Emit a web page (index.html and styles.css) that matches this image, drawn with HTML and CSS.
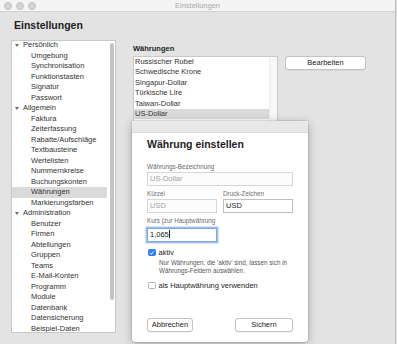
FILE: index.html
```html
<!DOCTYPE html>
<html lang="de">
<head>
    <meta charset="UTF-8">
    <meta name="viewport" content="width=device-width, initial-scale=1.0">
    <title>Einstellungen</title>
    <link rel="stylesheet" href="styles.css">
</head>
<body>
    <div class="window">
        <div class="titlebar">
            <div class="lights"><span></span><span></span><span></span></div>
            <div class="title">Einstellungen</div>
            <div></div>
        </div>

        <div class="content">
            <h1>Einstellungen</h1>

            <div class="panes">
                <!-- Navigation links -->
                <div class="sidebar">
                    <ul class="tree">
                        <li class="group"><i class="tri"></i>Persönlich</li>
                        <li>Umgebung</li>
                        <li>Synchronisation</li>
                        <li>Funktionstasten</li>
                        <li>Signatur</li>
                        <li>Passwort</li>
                        <li class="group"><i class="tri"></i>Allgemein</li>
                        <li>Faktura</li>
                        <li>Zeiterfassung</li>
                        <li>Rabatte/Aufschläge</li>
                        <li>Textbausteine</li>
                        <li>Wertelisten</li>
                        <li>Nummernkreise</li>
                        <li>Buchungskonten</li>
                        <li class="selected">Währungen</li>
                        <li>Markierungsfarben</li>
                        <li class="group"><i class="tri"></i>Administration</li>
                        <li>Benutzer</li>
                        <li>Firmen</li>
                        <li>Abteilungen</li>
                        <li>Gruppen</li>
                        <li>Teams</li>
                        <li>E-Mail-Konten</li>
                        <li>Programm</li>
                        <li>Module</li>
                        <li>Datenbank</li>
                        <li>Datensicherung</li>
                        <li>Beispiel-Daten</li>
                    </ul>
                    <div class="scroll"><div class="thumb"></div></div>
                </div>

                <!-- Währungsliste -->
                <div class="pane">
                    <div class="pane-label">Währungen</div>
                    <div class="pane-row">
                        <div class="list">
                            <ul>
                                <li>Russischer Rubel</li>
                                <li>Schwedische Krone</li>
                                <li>Singapur-Dollar</li>
                                <li>Türkische Lire</li>
                                <li>Taiwan-Dollar</li>
                                <li class="selected">US-Dollar</li>
                                <li>Ungarischer Forint</li>
                            </ul>
                            <div class="list-track"></div>
                        </div>
                        <button class="btn btn-edit">Bearbeiten</button>
                    </div>
                </div>
            </div>
        </div>

        <!-- Dialog -->
        <div class="sheet">
            <div class="sheet-top"></div>
            <div class="sheet-body">
                <h2>Währung einstellen</h2>

                <label class="lbl lbl-first">Währungs-Bezeichnung</label>
                <div class="field disabled">US-Dollar</div>

                <div class="cols">
                    <div>
                        <label class="lbl">Kürzel</label>
                        <div class="field disabled">USD</div>
                    </div>
                    <div>
                        <label class="lbl">Druck-Zeichen</label>
                        <div class="field">USD</div>
                    </div>
                </div>

                <div class="cols">
                    <div>
                        <label class="lbl">Kurs (zur Hauptwährung</label>
                        <div class="field focus">1,065<span class="caret"></span></div>
                    </div>
                </div>

                <div class="check check-first">
                    <span class="box checked">
                        <svg viewBox="0 0 10 10" width="8" height="8"><path d="M2.2 5.3 L4.2 7.4 L7.9 2.4" fill="none" stroke="#fff" stroke-width="1.6" stroke-linecap="round" stroke-linejoin="round"/></svg>
                    </span>
                    aktiv
                </div>
                <p class="hint">Nur Währungen, die 'aktiv' sind, lassen sich in<br>Währungs-Feldern auswählen.</p>

                <div class="check check-second">
                    <span class="box"></span>
                    als Hauptwährung verwenden
                </div>

                <div class="actions">
                    <button class="btn btn-cancel">Abbrechen</button>
                    <button class="btn btn-save">Sichern</button>
                </div>
            </div>
        </div>
    </div>
</body>
</html>
```

FILE: styles.css
```css
:root {
    --window-bg: #e3e3e3;
    --titlebar-bg: #f4f4f4;
    --border-color: #c9c9c9;
    --text-color: #333333;
    --label-color: #6a6a6a;
    --select-color: #dadada;
    --focus-color: #7fa8e2;
    --check-color: #2f80f3;
}

* {
    margin: 0;
    padding: 0;
    box-sizing: border-box;
    font-family: 'Liberation Sans', Arial, sans-serif;
}

body {
    background-color: var(--window-bg);
    color: var(--text-color);
    width: 397px;
    height: 344px;
    overflow: hidden;
}

.window {
    position: relative;
    width: 396px;
    height: 344px;
    border-right: 1px solid #bdbdbd;
    background-color: var(--window-bg);
}

/* Titelleiste */
.titlebar {
    height: 12px;
    display: grid;
    grid-template-columns: 1fr auto 1fr;
    align-items: center;
    background-color: var(--titlebar-bg);
    border-bottom: 1px solid #d2d2d2;
}

.lights {
    display: flex;
    gap: 4px;
    padding-left: 4px;
}

.lights span {
    width: 8px;
    height: 8px;
    border-radius: 50%;
    background-color: #d3d3d3;
    border: 1px solid #c4c4c4;
}

.title {
    font-size: 7.5px;
    color: #ababab;
}

.content {
    padding: 7px 0 0 11px;
}

h1 {
    font-size: 10.5px;
    line-height: 13px;
    font-weight: bold;
    color: #222;
    padding-left: 3px;
}

.panes {
    display: flex;
    gap: 17px;
    margin-top: 8px;
}

/* Seitenleiste */
.sidebar {
    width: 105px;
    height: 293px;
    background-color: #fff;
    border: 1px solid var(--border-color);
    display: flex;
    overflow: hidden;
}

.tree {
    list-style: none;
    width: 95px;
    margin-top: -1px;
}

.tree li {
    height: 10.52px;
    line-height: 10.52px;
    font-size: 7.5px;
    padding-left: 19px;
    white-space: nowrap;
    color: var(--text-color);
}

.tree li.group {
    padding-left: 3px;
    display: flex;
    align-items: center;
}

.tree li.selected {
    background-color: var(--select-color);
}

.tri {
    width: 0;
    height: 0;
    border-left: 2.2px solid transparent;
    border-right: 2.2px solid transparent;
    border-top: 3.6px solid #6b6b6b;
    margin-right: 4px;
}

.scroll {
    flex: 1;
    padding: 2px 0 0 3px;
}

.thumb {
    width: 3.5px;
    height: 257px;
    border-radius: 2px;
    background-color: #c4c4c4;
}

/* Rechter Bereich */
.pane-label {
    font-size: 7.5px;
    font-weight: bold;
    line-height: 10px;
    margin-top: 4px;
    color: #222;
}

.pane-row {
    display: flex;
    align-items: flex-start;
    gap: 7px;
    margin-top: 2px;
}

.list {
    width: 145px;
    height: 90px;
    background-color: #fff;
    border: 1px solid var(--border-color);
    display: flex;
}

.list ul {
    list-style: none;
    width: 135px;
}

.list li {
    height: 10.4px;
    line-height: 10.4px;
    font-size: 7.5px;
    padding-left: 1px;
    color: var(--text-color);
}

.list li.selected {
    background-color: var(--select-color);
}

.list-track {
    flex: 1;
    background-color: #f7f7f7;
    border-left: 1px solid #ececec;
}

.btn {
    height: 13.6px;
    font-size: 7.5px;
    color: #222;
    background-color: #fff;
    border: 1px solid #c2c2c2;
    border-radius: 3px;
    box-shadow: 0 0.5px 0.5px rgba(0, 0, 0, 0.08);
}

.btn-edit {
    width: 81px;
}

/* Dialog (Sheet) */
.sheet {
    position: absolute;
    left: 132px;
    top: 121px;
    width: 176px;
    height: 221px;
    background-color: #fff;
    border-radius: 0 0 4px 4px;
    box-shadow: 0 2px 10px rgba(0, 0, 0, 0.28), 0 0 0 0.5px rgba(0, 0, 0, 0.15);
    display: flex;
    flex-direction: column;
}

.sheet-top {
    height: 12px;
    background-color: #e8e8e8;
    border-bottom: 1px solid #dcdcdc;
    border-radius: 3px 3px 0 0;
}

.sheet-body {
    flex: 1;
    display: flex;
    flex-direction: column;
    padding: 0 15px 10.5px 15px;
}

h2 {
    font-size: 10.5px;
    line-height: 12px;
    font-weight: bold;
    color: #1e1e1e;
    margin-top: 5px;
}

.lbl {
    display: block;
    font-size: 6.3px;
    line-height: 8px;
    color: var(--label-color);
    margin-top: 4px;
    white-space: nowrap;
}

.lbl-first {
    margin-top: 13px;
}

.field {
    height: 13.5px;
    line-height: 11.5px;
    font-size: 7.5px;
    padding: 0 2px;
    margin-top: 1.3px;
    border: 1px solid #bfbfbf;
    background-color: #fff;
    color: #222;
}

.field.disabled {
    border-color: #d6d6d6;
    background-color: #fbfbfb;
    color: #a5a5a5;
}

.field.focus {
    margin-top: 3.5px;
    border-color: var(--focus-color);
    box-shadow: 0 0 0 1.4px #9dc0ee;
}

.caret {
    display: inline-block;
    width: 0.8px;
    height: 8px;
    background-color: #222;
    vertical-align: -1px;
    margin-left: 0.5px;
}

.cols {
    display: grid;
    grid-template-columns: 70px 70px;
    gap: 6px;
}

.check {
    display: flex;
    align-items: center;
    gap: 3px;
    font-size: 7.5px;
    line-height: 9px;
    color: #222;
    padding-left: 1px;
}

.check-first {
    margin-top: 6.5px;
}

.check-second {
    margin-top: 6.3px;
}

.box {
    width: 7.5px;
    height: 7.5px;
    border-radius: 1.5px;
    border: 1px solid #b5b5b5;
    background-color: #fff;
    display: flex;
    align-items: center;
    justify-content: center;
}

.box.checked {
    border-color: var(--check-color);
    background-color: var(--check-color);
}

.hint {
    font-size: 6.3px;
    line-height: 7.7px;
    color: #555;
    margin: 2.3px 0 0 12px;
}

.actions {
    margin-top: auto;
    display: flex;
    justify-content: space-between;
}

.btn-cancel {
    width: 46px;
}

.btn-save {
    width: 58px;
}
```
